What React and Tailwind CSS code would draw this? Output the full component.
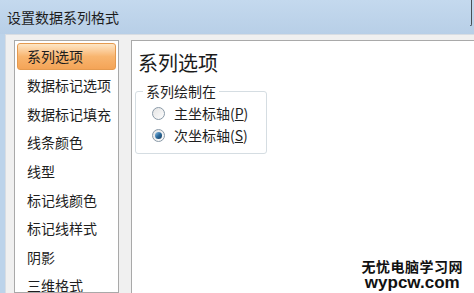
import React from "react";

const items = [
  "系列选项",
  "数据标记选项",
  "数据标记填充",
  "线条颜色",
  "线型",
  "标记线颜色",
  "标记线样式",
  "阴影",
  "三维格式",
];

function Radio({ checked }) {
  return (
    <span className="relative flex h-[13px] w-[13px] items-center justify-center rounded-full border border-[#8a9aa8] bg-gradient-to-br from-[#e4e4e4] to-[#fdfdfd]">
      {checked && (
        <span className="h-[7px] w-[7px] rounded-full bg-gradient-to-br from-[#8fc3e8] via-[#2d6c9e] to-[#163b5c]" />
      )}
    </span>
  );
}

export default function App() {
  const cjk = { fontFamily: '"Noto Sans CJK SC", "Noto Sans", sans-serif' };
  return (
    <div
      className="relative flex h-[293px] w-[474px] flex-col overflow-hidden bg-[#bcd3ea]"
      style={cjk}
    >
      {/* title bar */}
      <div className="flex h-[34px] shrink-0 items-center bg-gradient-to-b from-[#c4d9ee] to-[#b8cfe7] pl-[7px] text-[14px] text-[#1c1c1c]">
        设置数据系列格式
        <div className="absolute right-[2px] top-0 h-[26px] w-[2px] rounded-br-[3px] border-r border-b border-[#4a4f55]" />
      </div>

      {/* client area */}
      <div className="ml-[5px] flex min-h-0 flex-1 gap-[12px] overflow-hidden border-t border-l border-[#d8dde3] bg-[#f0f0f0] pl-[8px] pt-[5px]">
        {/* sidebar */}
        <div className="flex w-[105px] shrink-0 flex-col overflow-hidden border border-[#a9a9a9] bg-white px-[2px] pt-[2px] text-[14px] text-[#1e1e1e]">
          {items.map((t, i) => (
            <div
              key={t}
              className={
                i === 0
                  ? "mb-[1.5px] flex h-[27px] shrink-0 items-center rounded-[3px] border border-[#e59a4f] bg-gradient-to-b from-[#fde6c6] via-[#f8b56f] to-[#f4a457] pl-[9px]"
                  : "flex h-[28.6px] shrink-0 items-center pl-[10px]"
              }
            >
              {t}
            </div>
          ))}
        </div>

        {/* content */}
        <div className="flex-1 border-t border-l border-[#a9a9a9] bg-white pl-[6px] pt-[9px]">
          <div className="text-[20px] leading-[26px] text-[#1a1a1a]">系列选项</div>
          <div className="relative ml-[-3px] mt-[15px] h-[63px] w-[132px] rounded-[3px] border border-[#d5dde2]">
            <div className="absolute left-[7px] top-[-11px] bg-white px-[3px] text-[14px] leading-[20px] text-[#1e1e1e]">
              系列绘制在
            </div>
            <div className="flex flex-col gap-[4px] pl-[16px] pt-[12px] text-[14px] text-[#1e1e1e]">
              <div className="flex h-[18px] items-center gap-[9px]">
                <Radio />
                <span>
                  主坐标轴(<span className="underline">P</span>)
                </span>
              </div>
              <div className="flex h-[18px] items-center gap-[9px]">
                <Radio checked />
                <span>
                  次坐标轴(<span className="underline">S</span>)
                </span>
              </div>
            </div>
          </div>
        </div>
      </div>

      {/* watermark */}
      <div className="absolute bottom-[2px] right-[11px] flex flex-col items-center font-bold text-[#111]">
        <div className="text-[14px] leading-[17px] tracking-[0.5px]">无忧电脑学习网</div>
        <div
          className="text-[17px] leading-[16px]"
          style={{ fontFamily: '"Liberation Sans", Arial, sans-serif' }}
        >
          wypcw.com
        </div>
      </div>
    </div>
  );
}
